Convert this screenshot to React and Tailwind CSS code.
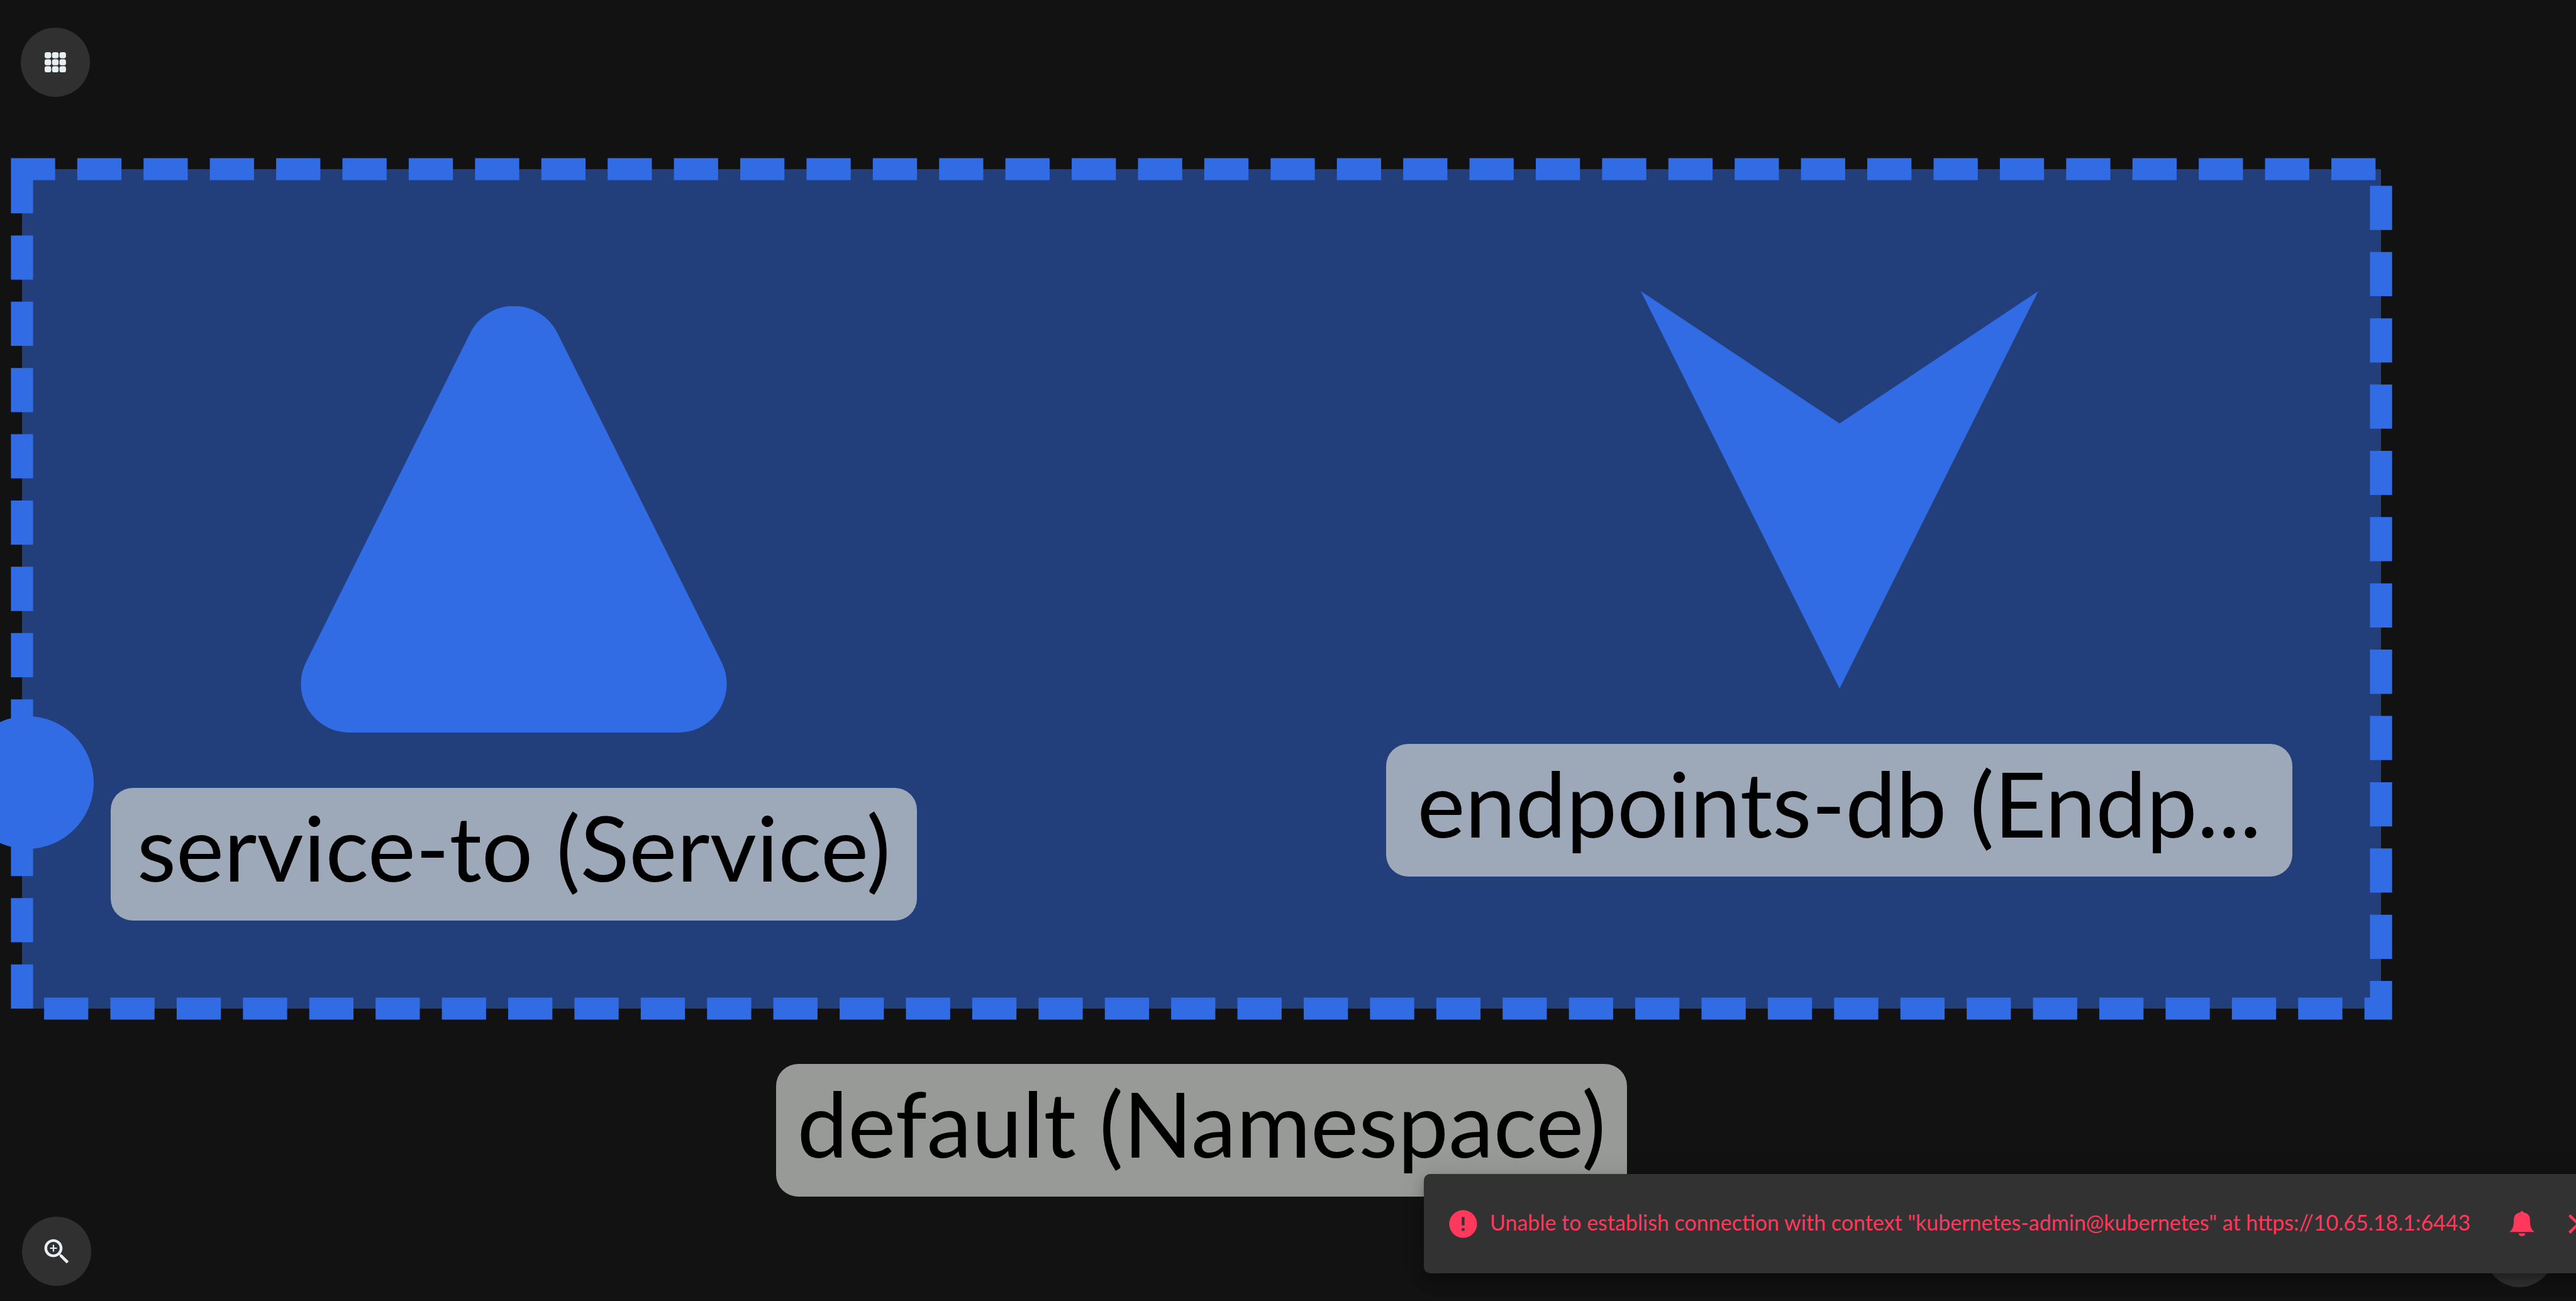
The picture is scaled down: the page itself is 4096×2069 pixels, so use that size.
import React from "react";

const FONT = "font-['Lato','Liberation_Sans',sans-serif]";

function NodeLabel({ className, children }) {
  return (
    <div
      className={`flex h-[211px] shrink-0 items-center justify-center whitespace-nowrap rounded-[35px] pb-6 text-[144px] leading-none text-black ${className}`}
    >
      <span>{children}</span>
    </div>
  );
}

function NamespaceBorder() {
  return (
    <svg
      className="block h-full w-full overflow-visible"
      viewBox="0 0 5118 1822"
      preserveAspectRatio="none"
      aria-hidden="true"
    >
      <rect width="5118" height="1822" fill="#223f7b" />
      <path
        d="M-24 0H5118V1822H0V-24"
        fill="none"
        stroke="#326ce5"
        strokeWidth="48"
        strokeDasharray="95.889 47.945"
      />
    </svg>
  );
}

function ServiceShape() {
  return (
    <svg className="block h-[678px] w-[678px]" viewBox="0 0 925 925" aria-hidden="true">
      <path
        fill="#326ce5"
        d="M106 925A105.5 105.5 0 0 1 12 772L368.5 57A105.5 105.5 0 0 1 556.5 57L913 772A105.5 105.5 0 0 1 819 925Z"
      />
    </svg>
  );
}

function EndpointsShape() {
  return (
    <svg className="block h-[632px] w-[632px]" viewBox="0 0 863 863" aria-hidden="true">
      <path fill="#326ce5" d="M0 0L431.5 287.5L863 0L431.5 863Z" />
    </svg>
  );
}

function GridIcon() {
  const cells = [0, 1, 2];
  return (
    <svg className="h-8 w-[34px]" viewBox="0 0 45 43" preserveAspectRatio="none" aria-hidden="true">
      {cells.map((row) =>
        cells.map((col) => (
          <rect
            key={`${row}-${col}`}
            x={col * 15.6}
            y={row * 15}
            width="13.7"
            height="13"
            rx="4.5"
            fill="#e7eff3"
          />
        ))
      )}
    </svg>
  );
}

function ZoomInIcon() {
  return (
    <svg className="h-[53px] w-[53px]" viewBox="0 0 24 24" fill="#e7eff3" aria-hidden="true">
      <path d="M15.5 14h-.79l-.28-.27C15.41 12.59 16 11.11 16 9.5 16 5.91 13.09 3 9.5 3S3 5.91 3 9.5 5.91 16 9.5 16c1.61 0 3.09-.59 4.23-1.57l.27.28v.79l5 4.99L20.49 19l-4.99-5zm-6 0C7.01 14 5 11.99 5 9.5S7.01 5 9.5 5 14 7.01 14 9.5 11.99 14 9.5 14z" />
      <path d="M12 10h-2v2H9v-2H7V9h2V7h1v2h2v1z" />
    </svg>
  );
}

function ErrorIcon() {
  return (
    <svg className="h-[53px] w-[53px] shrink-0" viewBox="0 0 24 24" fill="currentColor" aria-hidden="true">
      <path d="M12 2C6.48 2 2 6.48 2 12s4.48 10 10 10 10-4.48 10-10S17.52 2 12 2zm1 15h-2v-2h2v2zm0-4h-2V7h2v6z" />
    </svg>
  );
}

function BellIcon() {
  return (
    <svg className="h-10 w-10" viewBox="0 0 54 54" fill="currentColor" aria-hidden="true">
      <path d="M27 0C25 0 23.6 1.3 23.3 3.1C15 4.5 9.7 9.5 9.6 18.5C9.5 29 9 38.5 0 45H54C45 38.5 44.5 29 44.4 18.5C44.3 9.5 39 4.5 30.7 3.1C30.4 1.3 29 0 27 0Z" />
      <path d="M19.8 48H34.2C34.2 51.5 31 54 27 54S19.8 51.5 19.8 48Z" />
    </svg>
  );
}

function CloseIcon() {
  return (
    <svg className="h-[53px] w-[53px]" viewBox="0 0 24 24" fill="currentColor" aria-hidden="true">
      <path d="M19 6.41L17.59 5 12 10.59 6.41 5 5 6.41 10.59 12 5 17.59 6.41 19 12 13.41 17.59 19 19 17.59 13.41 12z" />
    </svg>
  );
}

function RoundButton({ label, className, children }) {
  return (
    <button
      type="button"
      aria-label={label}
      className={`absolute flex h-[110px] w-[110px] items-center justify-center rounded-full bg-[#303030] ${className}`}
    >
      {children}
    </button>
  );
}

function Notification() {
  return (
    <div
      role="alert"
      className="absolute bottom-11 left-[2264px] -right-[54px] flex h-[158px] items-center rounded-[10px] bg-[#323232] pl-9 text-[#ff385c] shadow-[0_7px_11px_-2px_rgba(0,0,0,0.2),0_13px_22px_0_rgba(0,0,0,0.14),0_2px_40px_0_rgba(0,0,0,0.12)]"
    >
      <ErrorIcon />
      <p className="ml-4 whitespace-nowrap pb-1 text-[34px] leading-none">
        Unable to establish connection with context "kubernetes-admin@kubernetes" at https://10.65.18.1:6443
      </p>
      <div className="ml-auto flex items-center gap-[43px] pr-6">
        <button type="button" aria-label="Notifications" className="flex">
          <BellIcon />
        </button>
        <button type="button" aria-label="Close" className="flex">
          <CloseIcon />
        </button>
      </div>
    </div>
  );
}

export default function App() {
  return (
    <main className={`relative h-screen w-full overflow-hidden bg-[#121212] ${FONT}`}>
      <section aria-label="default" className="absolute left-[35px] top-[269px] flex flex-col items-center gap-[88px]">
        <div className="relative h-[1335px] w-[3751px]">
          <NamespaceBorder />
          <div className="absolute -left-[97px] top-[870px] h-[211px] w-[211px] rounded-full bg-[#326ce5]" />
          <div className="absolute left-[141px] top-[218px] flex flex-col items-center gap-[88px]">
            <ServiceShape />
            <NodeLabel className="w-[1282px] bg-[#9da8b8]">service-to (Service)</NodeLabel>
          </div>
          <div className="absolute left-[2169px] top-[194px] flex flex-col items-center gap-[88px]">
            <EndpointsShape />
            <NodeLabel className="w-[1441px] bg-[#9da8b8]">endpoints-db (Endp...</NodeLabel>
          </div>
        </div>
        <NodeLabel className="w-[1353px] bg-[#989a97]">default (Namespace)</NodeLabel>
      </section>

      <RoundButton label="Applications" className="left-[33px] top-11">
        <GridIcon />
      </RoundButton>
      <RoundButton label="Zoom in" className="bottom-6 left-[35px]">
        <ZoomInIcon />
      </RoundButton>
      <RoundButton label="Help" className="bottom-[22px] right-[35px]" />

      <Notification />
    </main>
  );
}
